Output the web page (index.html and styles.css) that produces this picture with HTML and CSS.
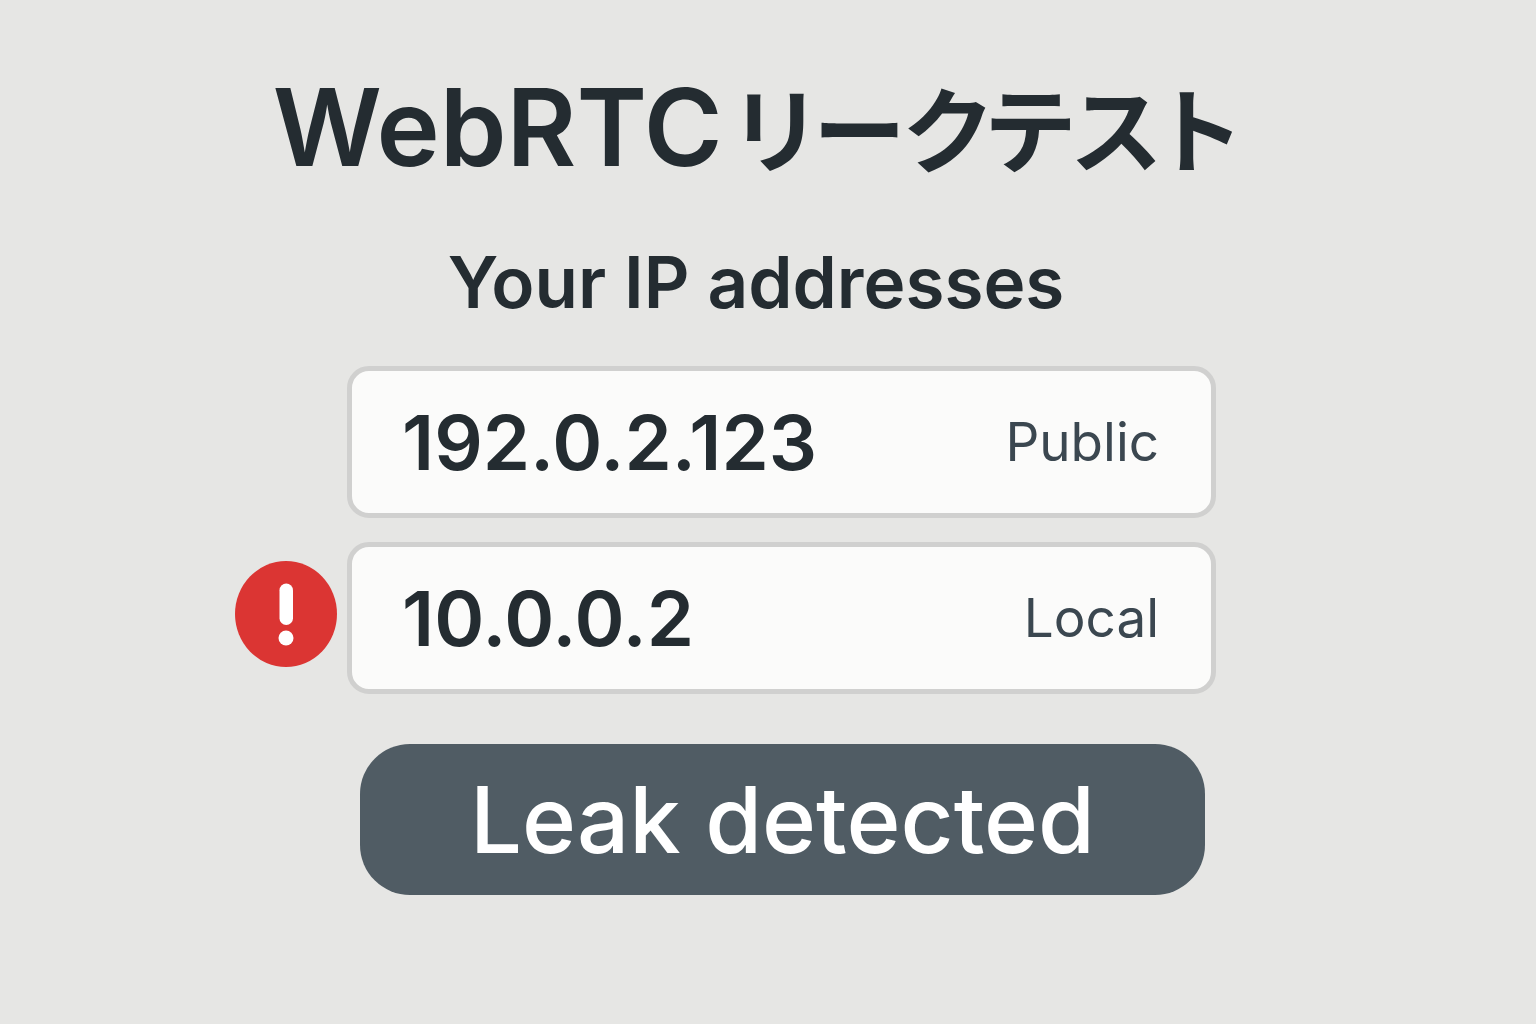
FILE: index.html
```html
<!DOCTYPE html>
<html lang="ja">
<head>
  <meta charset="UTF-8">
  <meta name="viewport" content="width=device-width, initial-scale=1.0">
  <title>WebRTCリークテスト</title>
  <link rel="stylesheet" href="styles.css">
</head>
<body>
  <main class="container">
    <h1 class="title">WebRTC<span class="title-ja">リークテスト</span></h1>
    <h2 class="subtitle">Your IP addresses</h2>

    <ul class="ip-list">
      <li class="ip-row">
        <div class="ip-card">
          <span class="ip-address">192.0.2.123</span>
          <span class="ip-type">Public</span>
        </div>
      </li>
      <li class="ip-row">
        <svg class="alert-icon" viewBox="0 0 102 114" role="img" aria-label="警告">
          <ellipse cx="51" cy="53" rx="51" ry="53" fill="#db3533"/>
          <rect x="44.500" y="22.500" width="13.500" height="41.500" rx="6.750" fill="#fff"/>
          <circle cx="51" cy="77" r="7.500" fill="#fff"/>
        </svg>
        <div class="ip-card">
          <span class="ip-address">10.0.0.2</span>
          <span class="ip-type">Local</span>
        </div>
      </li>
    </ul>

    <button class="result-button" type="button">Leak detected</button>
  </main>
</body>
</html>
```

FILE: styles.css
```css
* {
  box-sizing: border-box;
}

body {
  margin: 0;
  padding: 63px 24px 63px 0;
  background: #e6e6e4;
  color: #242c31;
  font-family: 'Inter', 'Noto Sans CJK JP', sans-serif;
}

.container {
  max-width: 1042px;
  margin: 0 auto;
  display: flex;
  flex-direction: column;
}

.title {
  margin: 0;
  font-size: 107px;
  font-weight: 600;
  line-height: 128px;
  text-align: center;
  white-space: nowrap;
}

.title-ja {
  margin-left: 12px;
  font-family: 'Noto Sans CJK JP', sans-serif;
  font-size: 93px;
  font-weight: 700;
  line-height: 1;
  font-feature-settings: 'palt';
}

.subtitle {
  margin: 47px 0 0;
  font-size: 71px;
  font-weight: 600;
  line-height: 88px;
  text-align: center;
}

.ip-list {
  margin: 40px 61px 0 0;
  padding: 0;
  list-style: none;
  display: flex;
  flex-direction: column;
  gap: 24px;
}

/* アイコン列とカード列 */
.ip-row {
  display: grid;
  grid-template-columns: 102px 1fr;
  column-gap: 10px;
  align-items: center;
}

.alert-icon {
  width: 102px;
  height: 114px;
}

.ip-card {
  grid-column: 2;
  display: flex;
  justify-content: space-between;
  align-items: center;
  padding: 24px 52px 24px 50px;
  background: #fbfbfa;
  border: 5px solid #d0d0cf;
  border-radius: 22px;
}

.ip-address {
  font-size: 76px;
  font-weight: 600;
  line-height: 94px;
}

.ip-type {
  color: #3b4750;
  font-size: 53px;
  line-height: 94px;
}

.result-button {
  margin: 50px 72px 0 125px;
  padding: 20px;
  border: none;
  border-radius: 50px;
  background: #505c64;
  color: #fff;
  font-family: inherit;
  font-size: 92px;
  font-weight: 500;
  line-height: 111px;
  cursor: pointer;
}
```
